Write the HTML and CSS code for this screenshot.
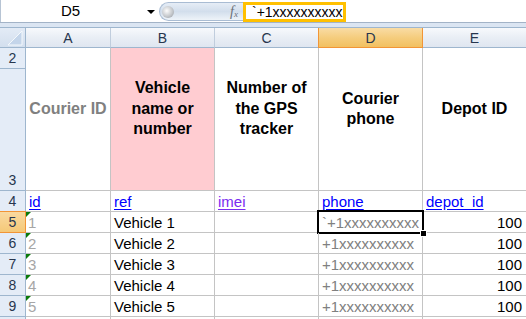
FILE: index.html
```html
<!DOCTYPE html>
<html lang="en">
<head>
    <meta charset="UTF-8">
    <title>Couriers sheet</title>
    <link rel="stylesheet" href="styles.css">
</head>
<body>
    <div class="formula-bar">
        <div class="name-box">D5</div>
        <div class="name-arrow"></div>
        <div class="fx-pill">
            <span class="knob"></span>
            <span class="fx">f<sub>x</sub></span>
        </div>
        <div class="formula-input">`+1xxxxxxxxxx</div>
        <div class="formula-rest"></div>
    </div>
    <div class="bar-gap"></div>

    <div class="sheet">
        <div class="corner">
            <svg width="25" height="20" viewBox="0 0 25 20">
                <polygon points="8,17 22,17 22,3" fill="#c4d5ea" stroke="#f4f8fc" stroke-width="1"/>
            </svg>
        </div>
        <div class="col-head">A</div>
        <div class="col-head">B</div>
        <div class="col-head">C</div>
        <div class="col-head sel">D</div>
        <div class="col-head">E</div>

        <div class="row-head">2</div>
        <div class="cell title muted span2">Courier ID</div>
        <div class="cell title pink span2">Vehicle<br>name or<br>number</div>
        <div class="cell title span2">Number of<br>the GPS<br>tracker</div>
        <div class="cell title span2">Courier<br>phone</div>
        <div class="cell title span2">Depot ID</div>
        <div class="row-head">3</div>

        <div class="row-head">4</div>
        <div class="cell"><a class="link">id</a></div>
        <div class="cell"><a class="link">ref</a></div>
        <div class="cell"><a class="link visited">imei</a></div>
        <div class="cell"><a class="link">phone</a></div>
        <div class="cell"><a class="link">depot_id</a></div>

        <div class="row-head sel">5</div>
        <div class="cell num-text">1</div>
        <div class="cell">Vehicle 1</div>
        <div class="cell"></div>
        <div class="cell phone active">`+1xxxxxxxxxx</div>
        <div class="cell right">100</div>

        <div class="row-head">6</div>
        <div class="cell num-text">2</div>
        <div class="cell">Vehicle 2</div>
        <div class="cell"></div>
        <div class="cell phone">+1xxxxxxxxxx</div>
        <div class="cell right">100</div>

        <div class="row-head">7</div>
        <div class="cell num-text">3</div>
        <div class="cell">Vehicle 3</div>
        <div class="cell"></div>
        <div class="cell phone">+1xxxxxxxxxx</div>
        <div class="cell right">100</div>

        <div class="row-head">8</div>
        <div class="cell num-text">4</div>
        <div class="cell">Vehicle 4</div>
        <div class="cell"></div>
        <div class="cell phone">+1xxxxxxxxxx</div>
        <div class="cell right">100</div>

        <div class="row-head">9</div>
        <div class="cell num-text">5</div>
        <div class="cell">Vehicle 5</div>
        <div class="cell"></div>
        <div class="cell phone">+1xxxxxxxxxx</div>
        <div class="cell right">100</div>

        <div class="row-head"></div>
        <div class="cell"></div>
        <div class="cell"></div>
        <div class="cell"></div>
        <div class="cell"></div>
        <div class="cell"></div>
    </div>
</body>
</html>
```

FILE: styles.css
```css
body { margin: 0; font-family: "Liberation Sans", Arial, sans-serif; background: #fff; overflow: hidden; }

/* formula bar */
.formula-bar { display: flex; height: 22px; border-bottom: 1px solid #a3b3c7; background: #fff; }
.name-box { width: 140px; text-align: center; font-size: 15px; line-height: 21px; color: #000; border-left: 1px solid #b7c4d4; box-sizing: border-box; }
.name-arrow { width: 19px; position: relative; }
.name-arrow::after { content: ""; position: absolute; left: 7px; top: 10px; border-top: 4px solid #000; border-left: 4px solid transparent; border-right: 4px solid transparent; }
.fx-pill { width: 84px; height: 19px; margin-top: 2px; box-sizing: border-box; border: 1px solid #a9bcd3; border-right: none; border-radius: 10px 0 0 10px; background: linear-gradient(#e6edf6, #d2deec 50%, #eef3f9); display: flex; align-items: center; justify-content: space-between; padding: 0 5px 0 2px; }
.knob { width: 12px; height: 12px; border-radius: 50%; background: radial-gradient(circle at 40% 40%, #fdfdfd, #c5c8cc 55%, #8f949a); }
.fx { font-family: "Liberation Serif", serif; font-style: italic; font-size: 14px; color: #6a6f76; line-height: 1; }
.fx sub { font-size: 9px; vertical-align: -1px; }
.formula-input { width: 103px; height: 20px; margin-top: 2px; box-sizing: border-box; border: 3px solid #ffc000; padding-left: 6px; font-size: 14px; line-height: 14px; color: #000; white-space: nowrap; overflow: hidden; }
.formula-rest { flex: 1; }
.bar-gap { height: 4px; background: #dbe5f2; }

/* grid */
.sheet { display: grid; grid-template-columns: 26px 85px 104px 104px 104px 104px; grid-template-rows: 20px 21px 122px repeat(7, 21px); border-top: 1px solid #9eb6ce; font-size: 15px; }
.corner { background: linear-gradient(#e3ebf6, #d3dfee); border-right: 1px solid #9eb6ce; border-bottom: 1px solid #9eb6ce; }
.corner svg { display: block; }
.col-head { background: linear-gradient(#f7f9fc, #e9eef5 50%, #dfe6f0); border-right: 1px solid #c0cddd; border-bottom: 1px solid #9eb6ce; display: flex; align-items: center; justify-content: center; font-size: 14px; color: #27364e; }
.col-head.sel { background: linear-gradient(#f9dca5, #f5cd7e 50%, #f2c060); border-right-color: #f29536; border-bottom-color: #f29536; box-shadow: -1px 0 0 #f29536; }
.row-head { background: #e4ecf7; border-right: 1px solid #9eb6ce; border-bottom: 1px solid #9eb6ce; display: flex; align-items: flex-end; justify-content: center; padding-bottom: 2px; box-sizing: border-box; font-size: 14px; color: #27364e; }
.row-head.sel { background: linear-gradient(#f9d9a0, #f5c978); border-right-color: #f29536; border-bottom-color: #f29536; box-shadow: 0 -1px 0 #f29536; }

.cell { border-right: 1px solid #c4c4c4; border-bottom: 1px solid #c4c4c4; display: flex; align-items: flex-end; padding: 0 3px 1px 3px; line-height: 17px; white-space: nowrap; color: #000; position: relative; }
.span2 { grid-row: span 2; }
.title { font-size: 16px; font-weight: bold; align-items: center; justify-content: center; text-align: center; line-height: 20.5px; padding-bottom: 20px; white-space: normal; }
.muted { color: #808080; }
.pink { background: #ffccd1; }
.link { color: #0000ff; text-decoration: underline; text-underline-offset: 2px; }
.link.visited { color: #7a2cf0; }
.num-text { color: #a6a6a6; padding-left: 2px; }
.num-text::before { content: ""; position: absolute; left: 0; top: 0; border-top: 5px solid #0a7a0a; border-right: 5px solid transparent; }
.phone { color: #808080; }
.right { justify-content: flex-end; padding-right: 4px; }
.active::after { content: ""; position: absolute; left: -2px; top: -2px; right: -2px; bottom: -2px; border: 2px solid #000; }
.active::before { content: ""; position: absolute; right: -5px; bottom: -5px; width: 5px; height: 5px; background: #000; border: 1px solid #fff; z-index: 1; }
```
